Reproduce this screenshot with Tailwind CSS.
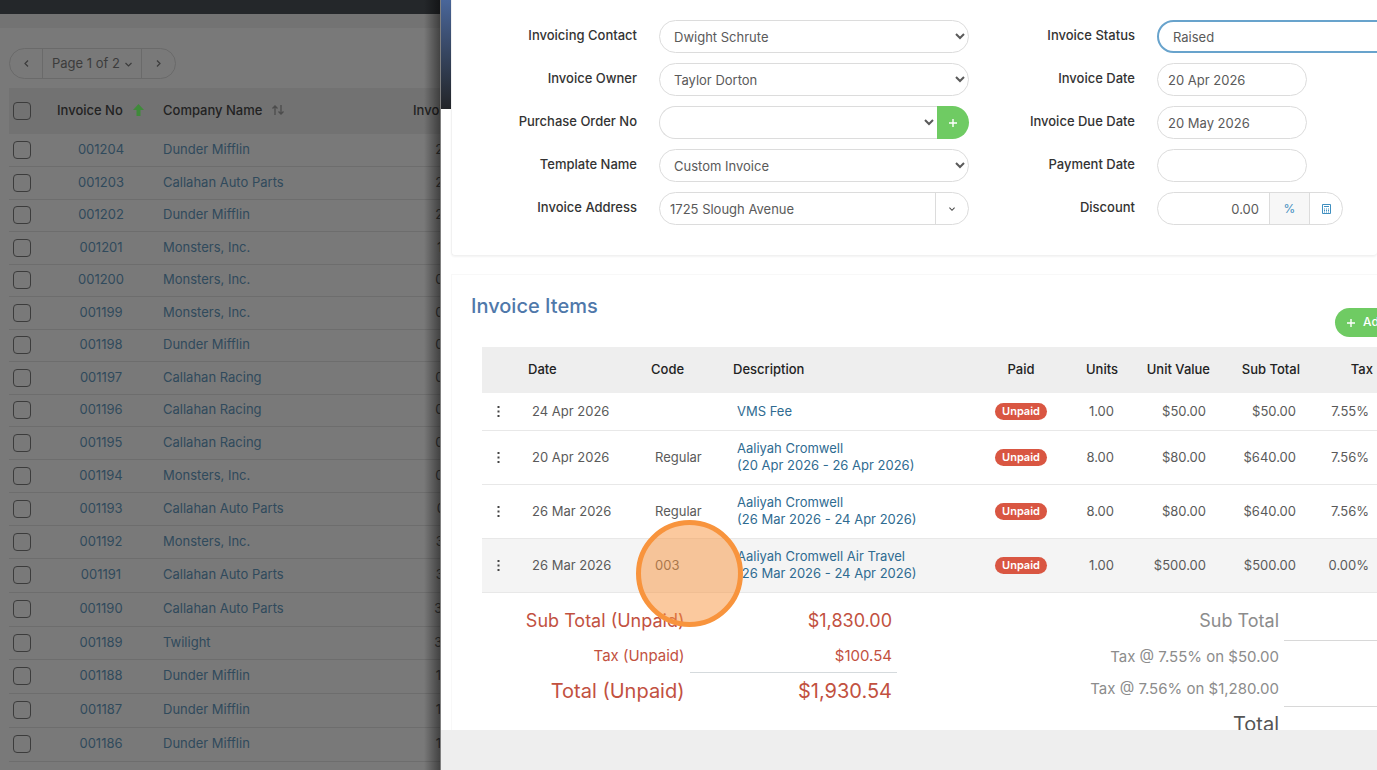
<!DOCTYPE html>
<html lang="en">
<head>
    <meta charset="UTF-8">
    <meta name="viewport" content="width=device-width, initial-scale=1.0">
    <title>Invoices</title>
    <script src="https://cdn.jsdelivr.net/npm/@tailwindcss/browser@4"></script>
</head>
<body class="flex h-screen overflow-hidden bg-[#797979] font-['Inter',sans-serif] text-[13px] leading-[17px] text-[#5a5a5a]">

    <!-- Invoice list, dimmed behind the drawer -->
    <main class="relative w-[440px] shrink-0 overflow-hidden bg-[#797979] text-[#304a5c]">
        <div class="h-[14px] bg-[#24272a]"></div>
        <div class="h-[14px] bg-[#737373]"></div>
        <nav class="mt-5 ml-[9px] inline-flex h-[31px] items-stretch rounded-full border border-[#6a6a6a] text-[#3c3c3c]" aria-label="Pages">
            <button class="flex w-[33px] items-center justify-center border-r border-[#6a6a6a]" aria-label="Previous page">
                <svg class="size-[7px]" viewBox="0 0 7 7" fill="none" stroke="currentColor" stroke-width="1.2"><path d="M5 .5 2 3.5l3 3"/></svg>
            </button>
            <button class="flex w-[99px] items-center justify-center gap-[5px] border-r border-[#6a6a6a] pb-px">
                Page 1 of 2
                <svg class="mt-[2px] size-[7px]" viewBox="0 0 7 7" fill="none" stroke="currentColor" stroke-width="1.2"><path d="m.5 2 3 3 3-3"/></svg>
            </button>
            <button class="flex w-[33px] items-center justify-center" aria-label="Next page">
                <svg class="size-[7px]" viewBox="0 0 7 7" fill="none" stroke="currentColor" stroke-width="1.2"><path d="m2 .5 3 3-3 3"/></svg>
            </button>
        </nav>
        <table class="mt-[9px] ml-[9px] w-[536px] table-fixed">
            <colgroup>
                <col class="w-[38px]"><col class="w-[108px]"><col class="w-[248px]"><col class="w-[142px]">
            </colgroup>
            <thead>
                <tr class="h-[46px] bg-[#727272] text-[#222]">
                    <th class="pl-1 text-left"><input type="checkbox" aria-label="Select all" class="block size-[18px] appearance-none rounded-[4px] border border-[#3c3c3c]"></th>
                    <th class="pb-[2px] pl-[10px] text-left font-medium">
                        <span class="flex items-center gap-[10px]">Invoice No
                            <svg class="h-3 w-[11px] shrink-0" viewBox="0 0 11 12" fill="#3f8a3a"><path d="M5.500 0 11 6H7.500v6h-4V6H0z"/></svg>
                        </span>
                    </th>
                    <th class="pb-[2px] pl-2 text-left font-medium">
                        <span class="flex items-center gap-[10px]">Company Name
                            <svg class="h-[10px] w-3" viewBox="0 0 12 10" fill="none" stroke="#4c4c4c" stroke-width="1.3"><path d="M3 10V1M.5 3.500 3 1l2.500 2.500M9 0v9M6.500 6.500 9 9l2.500-2.500"/></svg>
                        </span>
                    </th>
                    <th class="pb-[2px] pl-[10px] text-left font-medium">Invoice Date</th>
                </tr>
            </thead>
            <tbody id="invoiceRows"></tbody>
        </table>
        <!-- Drawer shadow -->
        <div class="absolute inset-y-0 right-0 w-4 bg-linear-to-r from-black/0 to-black/45"></div>
    </main>

    <!-- Invoice drawer -->
    <aside class="flex min-w-0 flex-1 flex-col border-l border-[#808080] bg-white">
        <div class="flex min-h-0 flex-1 overflow-hidden">
            <div class="h-[109px] w-[10px] shrink-0 bg-linear-to-b from-[#49669a] to-[#232529]"></div>
            <div class="min-w-0 flex-1">

                <section class="rounded-b border-b border-l border-[#f1f1f1] pt-5 pb-[30px] shadow-xs">
                    <form class="grid grid-cols-[185px_310px_144px_310px] gap-x-[22px] gap-y-[10px]">
                        <label for="contact" class="pt-[7px] text-right font-medium text-[#333]">Invoicing Contact</label>
                        <select id="contact" class="h-[33px] rounded-full border border-[#dcdcdc] pt-px pl-[10px]"><option>Dwight Schrute</option></select>
                        <label for="status" class="pt-[7px] text-right font-medium text-[#333]">Invoice Status</label>
                        <select id="status" class="h-[33px] rounded-full border-2 border-[#68a3cc] pt-px pl-[10px]"><option>Raised</option></select>

                        <label for="owner" class="pt-[7px] text-right font-medium text-[#333]">Invoice Owner</label>
                        <select id="owner" class="h-[33px] rounded-full border border-[#dcdcdc] pt-px pl-[10px]"><option>Taylor Dorton</option></select>
                        <label for="date" class="pt-[7px] text-right font-medium text-[#333]">Invoice Date</label>
                        <input id="date" type="text" value="20 Apr 2026" class="h-[33px] w-[150px] rounded-full border border-[#dcdcdc] px-[10px] pt-px">

                        <label for="po" class="pt-[7px] text-right font-medium text-[#333]">Purchase Order No</label>
                        <div class="flex h-[33px]">
                            <select id="po" class="min-w-0 flex-1 rounded-l-full border border-r-0 border-[#dcdcdc]"><option></option></select>
                            <button type="button" class="flex w-8 items-center justify-center rounded-r-full bg-[#6fcb63]" aria-label="Add purchase order">
                                <svg class="size-2" viewBox="0 0 8 8" stroke="#fff" stroke-width="1.4"><path d="M4 0v8M0 4h8"/></svg>
                            </button>
                        </div>
                        <label for="due" class="pt-[7px] text-right font-medium text-[#333]">Invoice Due Date</label>
                        <input id="due" type="text" value="20 May 2026" class="h-[33px] w-[150px] rounded-full border border-[#dcdcdc] px-[10px] pt-px">

                        <label for="template" class="pt-[7px] text-right font-medium text-[#333]">Template Name</label>
                        <select id="template" class="h-[33px] rounded-full border border-[#dcdcdc] pt-px pl-[10px]"><option>Custom Invoice</option></select>
                        <label for="payment" class="pt-[7px] text-right font-medium text-[#333]">Payment Date</label>
                        <input id="payment" type="text" class="h-[33px] w-[150px] rounded-full border border-[#dcdcdc] px-[10px] pt-px">

                        <label for="address" class="pt-[7px] text-right font-medium text-[#333]">Invoice Address</label>
                        <div class="flex h-[33px] rounded-full border border-[#dcdcdc]">
                            <input id="address" type="text" value="1725 Slough Avenue" class="min-w-0 flex-1 px-[10px] pt-px">
                            <button type="button" class="flex w-[33px] items-center justify-center border-l border-[#dcdcdc]" aria-label="Choose address">
                                <svg class="size-[6px]" viewBox="0 0 7 7" fill="none" stroke="#444" stroke-width="1.2"><path d="m.5 2 3 3 3-3"/></svg>
                            </button>
                        </div>
                        <label for="discount" class="pt-[7px] text-right font-medium text-[#333]">Discount</label>
                        <div class="flex h-[33px] w-[186px] overflow-hidden rounded-full border border-[#dcdcdc] text-[#3f8fc0]">
                            <input id="discount" type="text" value="0.00" class="min-w-0 flex-1 px-[10px] pt-px text-right text-[#5a5a5a]">
                            <button type="button" class="w-[41px] border-x border-[#dcdcdc] bg-[#f7f7f7] text-xs">%</button>
                            <button type="button" class="flex w-8 items-center justify-center" aria-label="Calculate">
                                <svg class="h-[10px] w-[9px]" viewBox="0 0 9 10" fill="none" stroke="currentColor"><path d="M.5.5h8v9h-8z"/><path d="M2 2.500h5"/><path d="M2 5h5M2 6.500h5M2 8h5" stroke-dasharray="1 1"/></svg>
                            </button>
                        </div>
                    </form>
                </section>

                <section class="mt-[18px] border-t border-l border-[#f8f8f8]">
                    <header class="-mr-20 flex items-start justify-between pt-[19px] pl-[19px]">
                        <h2 class="text-[20px] leading-[24px] font-medium text-[#4f78aa]">Invoice Items</h2>
                        <button type="button" class="mt-[14px] flex h-[29px] w-[122px] items-center gap-2 rounded-full bg-[#6fcb63] pb-px pl-3 text-xs font-medium text-white">
                            <svg class="mt-[2px] size-2" viewBox="0 0 8 8" stroke="#fff" stroke-width="1.4"><path d="M4 0v8M0 4h8"/></svg>Add Item
                        </button>
                    </header>
                    <div class="pt-[10px] pl-[30px]">
                        <table class="w-full table-fixed">
                            <colgroup>
                                <col class="w-[42px]"><col class="w-[123px]"><col class="w-[82px]"><col><col class="w-[82px]"><col class="w-[60px]"><col class="w-[92px]"><col class="w-[90px]"><col class="w-[73px]">
                            </colgroup>
                            <thead>
                                <tr class="h-[46px] bg-[#eee] text-[#222]">
                                    <th></th>
                                    <th class="px-1 pb-[2px] text-left font-medium">Date</th>
                                    <th class="px-1 pb-[2px] text-left font-medium">Code</th>
                                    <th class="px-1 pb-[2px] text-left font-medium">Description</th>
                                    <th class="px-1 pb-[2px] text-center font-medium">Paid</th>
                                    <th class="px-1 pb-[2px] text-right font-medium">Units</th>
                                    <th class="px-1 pb-[2px] text-right font-medium">Unit Value</th>
                                    <th class="px-1 pb-[2px] text-right font-medium">Sub Total</th>
                                    <th class="px-1 pb-[2px] text-right font-medium">Tax</th>
                                </tr>
                            </thead>
                            <tbody id="itemRows"></tbody>
                        </table>
                        <div class="flex items-start pt-[10px] text-[15px]">
                            <table class="w-[415px] shrink-0 table-fixed text-right text-[#c2513f]">
                                <tr class="h-9 text-[18px]"><td class="pr-[5px]">Sub Total (Unpaid)</td><td class="pr-[5px]">$1,830.00</td></tr>
                                <tr class="h-[34px]"><td class="pr-[5px]">Tax (Unpaid)</td><td class="border-b border-[#d5dadd] pr-[5px]">$100.54</td></tr>
                                <tr class="h-[38px] text-[20px]"><td class="pr-[5px]">Total (Unpaid)</td><td class="pr-[5px]">$1,930.54</td></tr>
                            </table>
                            <table class="flex-1 text-right text-[#8c8c8c]">
                                <tr class="h-[38px] text-[18px]"><td class="pr-[5px] pb-[2px]">Sub Total</td><td class="w-[93px] border-b border-[#d8d8d8]"></td></tr>
                                <tr class="h-8"><td class="pr-[5px]">Tax @ 7.55% on $50.00</td><td></td></tr>
                                <tr class="h-[34px]"><td class="pr-[5px] pb-[2px]">Tax @ 7.56% on $1,280.00</td><td class="border-b border-[#d8d8d8]"></td></tr>
                                <tr class="h-9 text-[20px] text-[#555]"><td class="pr-[5px]">Total</td><td></td></tr>
                            </table>
                        </div>
                    </div>
                </section>
            </div>
        </div>
        <footer class="h-10 shrink-0 bg-[#eee]"></footer>
    </aside>

    <!-- Click marker -->
    <div class="pointer-events-none absolute top-[520px] left-[636px] size-[107px] rounded-full border-5 border-[#f8943d] bg-[#f8943d]/50"></div>

    <script>
        // number, company, date, row height
        const invoices = [
            ['001204', 'Dunder Mifflin', '24 Apr 2026', 'h-[32px]'],
            ['001203', 'Callahan Auto Parts', '24 Apr 2026', 'h-[33px]'],
            ['001202', 'Dunder Mifflin', '24 Apr 2026', 'h-[32px]'],
            ['001201', 'Monsters, Inc.', '17 Apr 2026', 'h-[33px]'],
            ['001200', 'Monsters, Inc.', '09 Apr 2026', 'h-[32px]'],
            ['001199', 'Monsters, Inc.', '09 Apr 2026', 'h-[33px]'],
            ['001198', 'Dunder Mifflin', '02 Apr 2026', 'h-[32px]'],
            ['001197', 'Callahan Racing', '02 Apr 2026', 'h-[33px]'],
            ['001196', 'Callahan Racing', '02 Apr 2026', 'h-[32px]'],
            ['001195', 'Callahan Racing', '02 Apr 2026', 'h-[33px]'],
            ['001194', 'Monsters, Inc.', '06 Apr 2026', 'h-[33px]'],
            ['001193', 'Callahan Auto Parts', '01 Apr 2026', 'h-[33px]'],
            ['001192', 'Monsters, Inc.', '31 Mar 2026', 'h-[33px]'],
            ['001191', 'Callahan Auto Parts', '31 Mar 2026', 'h-[34px]'],
            ['001190', 'Callahan Auto Parts', '30 Mar 2026', 'h-[34px]'],
            ['001189', 'Twilight', '30 Mar 2026', 'h-[33px]'],
            ['001188', 'Dunder Mifflin', '16 Mar 2026', 'h-[34px]'],
            ['001187', 'Dunder Mifflin', '16 Mar 2026', 'h-[34px]'],
            ['001186', 'Dunder Mifflin', '16 Mar 2026', 'h-[34px]']
        ];

        document.getElementById('invoiceRows').innerHTML = invoices.map(([no, company, date, height]) => `
            <tr class="${height} border-b border-[#6d6d6d]">
                <td class="pl-1"><input type="checkbox" aria-label="Select ${no}" class="block size-[18px] appearance-none rounded-[4px] border border-[#3c3c3c]"></td>
                <td class="pb-px text-center"><a href="#">${no}</a></td>
                <td class="pb-px pl-2"><a href="#">${company}</a></td>
                <td class="pb-px text-center whitespace-nowrap text-[#333]">${date}</td>
            </tr>`).join('');

        // date, code, description, units, unit value, sub total, tax, row classes
        const items = [
            ['24 Apr 2026', '', 'VMS Fee', '1.00', '$50.00', '$50.00', '7.55%', 'h-[37px]'],
            ['20 Apr 2026', 'Regular', 'Aaliyah Cromwell<br>(20 Apr 2026 - 26 Apr 2026)', '8.00', '$80.00', '$640.00', '7.56%', 'h-[54px]'],
            ['26 Mar 2026', 'Regular', 'Aaliyah Cromwell<br>(26 Mar 2026 - 24 Apr 2026)', '8.00', '$80.00', '$640.00', '7.56%', 'h-[54px]'],
            ['26 Mar 2026', '003', 'Aaliyah Cromwell Air Travel<br>(26 Mar 2026 - 24 Apr 2026)', '1.00', '$500.00', '$500.00', '0.00%', 'h-[54px] bg-[#f4f4f4]']
        ];

        document.getElementById('itemRows').innerHTML = items.map(([date, code, text, units, value, sub, tax, row]) => `
            <tr class="${row} border-b border-[#e8e8e8]">
                <td class="pl-[15px]"><button type="button" class="block" aria-label="Row menu">
                    <svg class="h-[11px] w-[3px]" viewBox="0 0 3 11" fill="#444"><path d="M.5 0h2v2h-2zM.5 4.500h2v2h-2zM.5 9h2v2h-2z"/></svg>
                </button></td>
                <td class="px-2">${date}</td>
                <td class="px-2">${code}</td>
                <td class="px-2"><a href="#" class="text-[#2f6b91]">${text}</a></td>
                <td class="text-center"><span class="inline-block rounded-full bg-[#d95642] px-[7px] text-[11px] font-semibold text-white">Unpaid</span></td>
                <td class="px-2 text-right">${units}</td>
                <td class="px-2 text-right">${value}</td>
                <td class="px-2 text-right">${sub}</td>
                <td class="px-2 text-right">${tax}</td>
            </tr>`).join('');
    </script>
</body>
</html>
